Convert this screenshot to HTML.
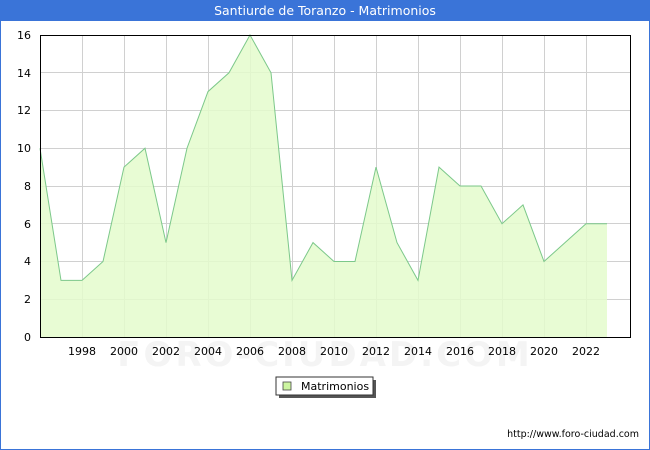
<!DOCTYPE html>
<html><head><meta charset="utf-8"><style>
html,body{margin:0;padding:0;background:#fff;}
body{width:650px;height:450px;overflow:hidden;position:relative;font-family:"DejaVu Sans","Liberation Sans",sans-serif;}
.frame{position:absolute;left:0;top:0;width:648px;height:448px;border:1px solid #3a74d8;}
.title{position:absolute;left:0;top:0;width:650px;height:21px;background:#3a74d8;color:#fff;font-size:12.5px;text-align:center;line-height:22px;}
</style></head><body>
<div class="frame"></div>
<div class="title">Santiurde de Toranzo - Matrimonios</div>
<svg width="650" height="450" style="position:absolute;left:0;top:0" font-family="DejaVu Sans, Liberation Sans, sans-serif" font-size="11">
<text x="325" y="366" text-anchor="middle" font-size="34" fill="#f4f4f4" font-weight="bold" letter-spacing="3">FORO-CIUDAD.COM</text>
<g stroke="#d0d0d0" stroke-width="1">
<line x1="40" y1="299.5" x2="630" y2="299.5"/><line x1="40" y1="261.5" x2="630" y2="261.5"/>
<line x1="40" y1="223.5" x2="630" y2="223.5"/><line x1="40" y1="186.5" x2="630" y2="186.5"/>
<line x1="40" y1="148.5" x2="630" y2="148.5"/><line x1="40" y1="110.5" x2="630" y2="110.5"/>
<line x1="40" y1="72.5" x2="630" y2="72.5"/>
<line x1="82.5" y1="35" x2="82.5" y2="337"/><line x1="124.5" y1="35" x2="124.5" y2="337"/>
<line x1="166.5" y1="35" x2="166.5" y2="337"/><line x1="208.5" y1="35" x2="208.5" y2="337"/>
<line x1="250.5" y1="35" x2="250.5" y2="337"/><line x1="292.5" y1="35" x2="292.5" y2="337"/>
<line x1="334.5" y1="35" x2="334.5" y2="337"/><line x1="376.5" y1="35" x2="376.5" y2="337"/>
<line x1="418.5" y1="35" x2="418.5" y2="337"/><line x1="460.5" y1="35" x2="460.5" y2="337"/>
<line x1="502.5" y1="35" x2="502.5" y2="337"/><line x1="544.5" y1="35" x2="544.5" y2="337"/>
<line x1="586.5" y1="35" x2="586.5" y2="337"/>
</g>
<polygon fill="#e4fccc" fill-opacity="0.85" stroke="none" points="40,337 40,148.25 61,280.4 82,280.4 103,261.5 124,167.1 145,148.25 166,242.6 187,148.25 208,91.6 229,72.75 250,35 271,72.75 292,280.4 313,242.6 334,261.5 355,261.5 376,167.1 397,242.6 418,280.4 439,167.1 460,186 481,186 502,223.75 523,204.9 544,261.5 565,242.6 586,223.75 607,223.75 607,337"/>
<polyline fill="none" stroke="#7cc88a" stroke-width="1" points="40,148.25 61,280.4 82,280.4 103,261.5 124,167.1 145,148.25 166,242.6 187,148.25 208,91.6 229,72.75 250,35 271,72.75 292,280.4 313,242.6 334,261.5 355,261.5 376,167.1 397,242.6 418,280.4 439,167.1 460,186 481,186 502,223.75 523,204.9 544,261.5 565,242.6 586,223.75 607,223.75"/>
<rect x="40.5" y="35.5" width="590" height="302" fill="none" stroke="#000" stroke-width="1"/>
<g text-anchor="end" fill="#000">
<text x="31" y="341">0</text><text x="31" y="303">2</text><text x="31" y="265">4</text>
<text x="31" y="228">6</text><text x="31" y="190">8</text><text x="31" y="152">10</text>
<text x="31" y="114">12</text><text x="31" y="77">14</text><text x="31" y="39">16</text>
</g>
<g text-anchor="middle" fill="#000">
<text x="82" y="355">1998</text><text x="124" y="355">2000</text><text x="166" y="355">2002</text>
<text x="208" y="355">2004</text><text x="250" y="355">2006</text><text x="292" y="355">2008</text>
<text x="334" y="355">2010</text><text x="376" y="355">2012</text><text x="418" y="355">2014</text>
<text x="460" y="355">2016</text><text x="502" y="355">2018</text><text x="544" y="355">2020</text>
<text x="586" y="355">2022</text>
</g>
<rect x="279" y="380" width="97" height="18" fill="#555"/>
<rect x="276" y="377" width="97" height="18" fill="#fff" stroke="#333" stroke-width="1"/>
<rect x="283" y="382" width="8" height="8" fill="#ccf5a0" stroke="#444" stroke-width="0.8"/>
<text x="301" y="390" font-size="11">Matrimonios</text>
<text x="639" y="437" text-anchor="end" font-size="9.5" fill="#000">http://www.foro-ciudad.com</text>
</svg>
</body></html>
